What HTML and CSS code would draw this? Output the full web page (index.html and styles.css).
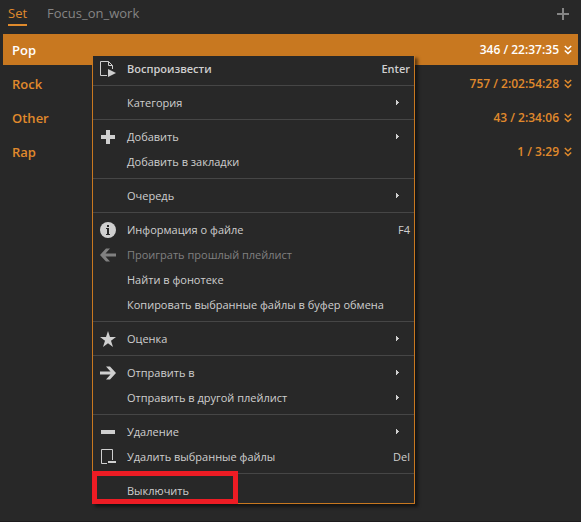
FILE: index.html
```html
<!DOCTYPE html>
<html lang="ru">
<head>
<meta charset="utf-8">
<title>Set</title>
<link rel="stylesheet" href="styles.css">
</head>
<body>
<svg class="symbols">
  <symbol id="chevrons" viewBox="0 0 8 10"><path d="M.8 1L4 4l3.200-3M.8 5.500L4 8.500l3.200-3"/></symbol>
  <symbol id="submenu" viewBox="0 0 3 5"><path d="M0 0h1v1h1v1h1v1H2v1H1v1H0z"/></symbol>
</svg>
<header class="tabs">
  <button class="tab tab-active">Set</button>
  <button class="tab">Focus_on_work</button>
  <button class="add" aria-label="Новый плейлист"><svg viewBox="0 0 12 12"><path d="M5 0h2v5h5v2H7v5H5V7H0V5h5z"/></svg></button>
</header>
<main>
  <ul class="groups">
    <li><button class="group group-selected"><span>Pop</span><span class="total">346 / 22:37:35</span><svg class="chevrons"><use href="#chevrons"/></svg></button></li>
    <li><button class="group"><span>Rock</span><span class="total">757 / 2:02:54:28</span><svg class="chevrons"><use href="#chevrons"/></svg></button></li>
    <li><button class="group"><span>Other</span><span class="total">43 / 2:34:06</span><svg class="chevrons"><use href="#chevrons"/></svg></button></li>
    <li><button class="group"><span>Rap</span><span class="total">1 / 3:29</span><svg class="chevrons"><use href="#chevrons"/></svg></button></li>
  </ul>
</main>
<div class="menu" role="menu">
  <button class="item item-default" role="menuitem"><svg class="icon" viewBox="0 0 16 16"><path class="line" d="M7 14.500H.5V.5h8l4 4V8M8.500 .5v4h4"/><path d="M8 8l8 4-8 4z"/></svg><span>Воспроизвести</span><span class="key">Enter</span></button>
  <hr>
  <button class="item" role="menuitem"><span class="icon"></span><span>Категория</span><svg class="arrow"><use href="#submenu"/></svg></button>
  <hr>
  <button class="item" role="menuitem"><svg class="icon" viewBox="0 0 16 16"><path d="M6 1h4v5h5v4h-5v5H6v-5H1V6h5z"/></svg><span>Добавить</span><svg class="arrow"><use href="#submenu"/></svg></button>
  <button class="item" role="menuitem"><span class="icon"></span><span>Добавить в закладки</span></button>
  <hr>
  <button class="item" role="menuitem"><span class="icon"></span><span>Очередь</span><svg class="arrow"><use href="#submenu"/></svg></button>
  <hr>
  <button class="item" role="menuitem"><svg class="icon" viewBox="0 0 16 16"><circle cx="8" cy="8" r="8"/><path class="cut" d="M7 3h2v2H7zM6 6h3v6h1v1H6v-1h1V7H6z"/></svg><span>Информация о файле</span><span class="key">F4</span></button>
  <button class="item" role="menuitem" disabled><svg class="icon" viewBox="0 0 16 16"><path d="M6 1.500h4L5.500 6.500H16v3H5.500l4.500 5H6L0 8z"/></svg><span>Проиграть прошлый плейлист</span></button>
  <button class="item" role="menuitem"><span class="icon"></span><span>Найти в фонотеке</span></button>
  <button class="item" role="menuitem"><span class="icon"></span><span>Копировать выбранные файлы в буфер обмена</span></button>
  <hr>
  <button class="item" role="menuitem"><svg class="icon" viewBox="0 0 16 16"><path d="M8 0l2 6h6l-5 3.700L13 16l-5-3.800L3 16l2-6.300L0 6h6z"/></svg><span>Оценка</span><svg class="arrow"><use href="#submenu"/></svg></button>
  <hr>
  <button class="item" role="menuitem"><svg class="icon" viewBox="0 0 16 16"><path d="M10 1.500H6l4.500 5H0v3h10.500l-4.500 5h4L16 8z"/></svg><span>Отправить в</span><svg class="arrow"><use href="#submenu"/></svg></button>
  <button class="item" role="menuitem"><span class="icon"></span><span>Отправить в другой плейлист</span><svg class="arrow"><use href="#submenu"/></svg></button>
  <hr>
  <button class="item" role="menuitem"><svg class="icon" viewBox="0 0 16 16"><path d="M1 6h14v4H1z"/></svg><span>Удаление</span><svg class="arrow"><use href="#submenu"/></svg></button>
  <button class="item" role="menuitem"><svg class="icon" viewBox="0 0 16 16"><path class="line" d="M7 14.500H1.500V.5h11V11"/><path d="M8 12h8v2H8z"/></svg><span>Удалить выбранные файлы</span><span class="key">Del</span></button>
  <hr>
  <button class="item item-marked" role="menuitem"><span class="icon"></span><span>Выключить</span></button>
</div>
</body>
</html>
```
FILE: styles.css
```css
:root {
  --bg: #282828;
  --accent: #c87820;
  --accent-text: #e08a2c;
  --text: #cfcfcf;
}

*, *::before, *::after { box-sizing: border-box; }

body {
  margin: 0;
  min-height: 100vh;
  border-bottom: 1px solid #1e1c1e;
  background: var(--bg);
  font-family: "Open Sans", "Noto Sans", sans-serif;
}

button {
  padding: 0;
  border: 0;
  background: none;
  font: inherit;
  color: inherit;
}

.symbols { display: none; }

.tabs {
  display: flex;
  align-items: flex-start;
  gap: 20px;
  padding: 2px 12px 0 8px;
  height: 34px;
  font-size: 13px;
  line-height: 22px;
  color: #858585;
}

.tab { height: 24px; border-bottom: 2px solid transparent; }
.tab-active { color: var(--accent-text); border-color: var(--accent-text); }

.add { margin: 6px 0 0 auto; width: 12px; height: 12px; }
.add svg { display: block; fill: #858585; }

.groups {
  display: flex;
  flex-direction: column;
  gap: 3px;
  margin: 0 3px;
  padding: 0;
  list-style: none;
}

.group {
  display: flex;
  align-items: center;
  gap: 5px;
  width: 100%;
  height: 31px;
  padding: 0 6px 0 9px;
  font-size: 13px;
  font-weight: 600;
  color: var(--accent-text);
}

.group-selected { background: var(--accent); color: #fff; }
.total { margin-left: auto; font-size: 12px; }

.chevrons {
  width: 8px;
  height: 10px;
  fill: none;
  stroke: currentColor;
  stroke-width: 1.5;
}

.menu {
  position: absolute;
  top: 55px;
  left: 92px;
  width: 323px;
  border: 1px solid var(--accent);
  background: var(--bg);
  box-shadow: 3px 3px 3px rgba(0, 0, 0, 0.5);
  font-size: 11px;
  color: var(--text);
}

.menu hr {
  margin: 4px 0;
  border: 0;
  border-top: 1px solid #464646;
}

.item {
  display: flex;
  align-items: center;
  width: 100%;
  height: 25px;
  padding: 0 4px 0 7px;
  text-align: left;
}

.item:disabled { color: #808080; }
.item-default { font-weight: 600; }

.icon {
  width: 16px;
  height: 16px;
  margin-right: 11px;
  fill: currentColor;
}

.icon .line { fill: none; stroke: currentColor; }
.icon .cut { fill: var(--bg); }
.key { margin-left: auto; }

.arrow {
  width: 3px;
  height: 5px;
  margin: 0 11px 0 auto;
  fill: currentColor;
}

.item-marked { position: relative; }

.item-marked::after {
  content: "";
  position: absolute;
  top: -7px;
  bottom: -1px;
  left: -1px;
  width: 146px;
  border: 5px solid #ed1c24;
}
```
